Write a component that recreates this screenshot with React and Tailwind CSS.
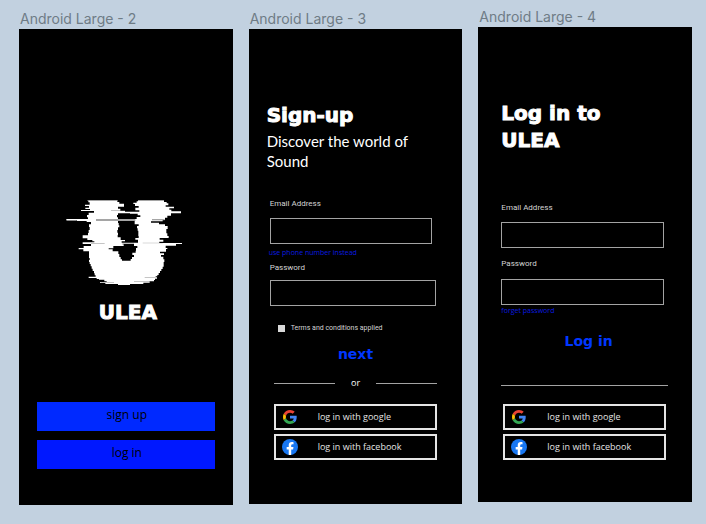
const heading = "font-['DejaVu_Sans',sans-serif] font-bold text-white text-[20px] leading-[27px] [-webkit-text-stroke:1px_#fff]";
const label = "block w-fit font-['Roboto',sans-serif] text-[8px] leading-[10px] text-[#d4d4d4]";
const field = "block h-[26px] w-full border border-[#a3a3a3] bg-black px-2 text-[9px] text-white outline-none";
const hint = "block w-fit text-[7px] leading-[10px] text-[#0a1be0]";
const action = "block w-full text-center font-['DejaVu_Sans',sans-serif] text-[14px] font-bold leading-5 text-[#0037ff]";

function Artboard({ title, className, children }) {
  return (
    <section className={`min-w-0 flex-1 ${className}`}>
      <h2 className="mb-px whitespace-nowrap pl-px font-['Inter',sans-serif] text-[14px] leading-[18px] text-[#6f7c86]">{title}</h2>
      <div className="bg-black font-['Open_Sans',sans-serif]">{children}</div>
    </section>
  );
}

function GlitchLogo() {
  return (
    <svg viewBox="48 54 348 264" className="block h-[88px] w-[116px]" fill="#fff" role="img" aria-label="ULEA logo">
      <path d="M115 60H202V66H208V71H222V80H204V86H211V92H225V95H243V100H204V105H201V112H204V117H256V123H204V129H206V136H208V142H204V150H202V158H204V165H203V172H212V180H225V184H215V188H264V179H256V174H266V168H265V152H263V145H261V138H266V133H254V117H260V111H271V106H263V101H240V95H268V91H256V83H266V78H255V72H250V68H260V64H264V60H342V66H350V70H355V76H347V80H372V85H358V89H364V94H393V100H363V107H352V113H345V120H338V124H303V128H327V133H345V138H353V147H349V160H352V168H356V174H329V179H340V185H328V189H396V192H378V197H347V204H352V207H348V215H330V220H342V225H333V230H340V238H343V246H341V260H338V267H334V273H330V279H326V285H322V289H317V292H321V296H315V300H312V304H299V308H280V312H240V315H204V312H166V309H150V306H170V304H163V300H147V297H140V294H116V290H137V286H134V280H132V273H128V266H125V259H122V252H119V246H117V240H119V234H117V214H100V208H86V204H101V198H123V192H98V187H133V184H127V180H112V175H98V166H114V159H116V150H119V141H117V133H123V126H110V123H81V121H49V117H114V112H111V105H116V98H132V93H93V90H120V87H106V83H117V78H105V74H119V67H115Z" />
      <path fill="#000" d="M217 191H252V198H262V204H258V212H257V218H247V225H252V231H246V237H242V242H216V238H212V231H208V222H205V214H188V208H176V205H190V198H221V193H217Z" />
      <path fill="#000" d="M123 189H164V191H123ZM278 188H338V190H278ZM183 90H225V92H183ZM146 298H163V300H146ZM284 291H316V293H284ZM252 304H300V306H252ZM151 306H192V308H151Z" opacity=".3" />
      <path fill="#888" d="M138 118H256V122H138ZM50 120H80V123H50ZM306 118H344V121H306ZM112 60H202V62H112ZM264 60H342V62H264Z" />
    </svg>
  );
}

function GoogleMark() {
  return (
    <svg viewBox="0 0 48 48" className="size-[14px]" aria-hidden="true">
      <path fill="#ea4335" d="M24 9.500c3.540 0 6.710 1.220 9.210 3.600l6.850-6.850C35.900 2.380 30.470 0 24 0 14.620 0 6.510 5.380 2.560 13.220l7.980 6.190C12.430 13.720 17.740 9.500 24 9.500z" />
      <path fill="#4285f4" d="M46.980 24.550c0-1.570-.15-3.090-.38-4.550H24v9.020h12.940c-.58 2.960-2.260 5.480-4.780 7.180l7.730 6c4.510-4.180 7.090-10.360 7.090-17.650z" />
      <path fill="#fbbc05" d="M10.530 28.590c-.48-1.450-.76-2.990-.76-4.590s.27-3.140.76-4.590l-7.980-6.190C.92 16.460 0 20.120 0 24s.92 7.540 2.560 10.780l7.970-6.190z" />
      <path fill="#34a853" d="M24 48c6.480 0 11.930-2.130 15.890-5.810l-7.730-6c-2.150 1.450-4.920 2.300-8.160 2.300-6.260 0-11.570-4.220-13.470-9.910l-7.980 6.190C6.510 42.620 14.620 48 24 48z" />
    </svg>
  );
}

function FacebookMark() {
  return (
    <svg viewBox="0 0 24 24" className="size-4" aria-hidden="true">
      <circle cx="12" cy="12" r="12" fill="#1877f2" />
      <path fill="#fff" d="M10.1 24v-8.4H7V12h3.100V9.300c0-3 1.800-4.700 4.600-4.700 1.300 0 2.600.25 2.600.25v3h-1.500c-1.500 0-2 .95-2 1.900V12h3.400l-.55 3.600h-2.850V24z" />
    </svg>
  );
}

function SocialButtons() {
  const button = "flex h-[26px] w-full items-center border-2 border-[#e5e5e5] bg-black pl-[6px] text-left text-[9px] leading-3 text-[#e5e5e5]";
  const icon = "mr-5 flex w-4 shrink-0 justify-center";
  return (
    <div className="flex flex-col gap-1">
      <button type="button" className={button}>
        <span className={icon}><GoogleMark /></span>log in with google
      </button>
      <button type="button" className={button}>
        <span className={icon}><FacebookMark /></span>log in with facebook
      </button>
    </div>
  );
}

export default function App() {
  return (
    <main className="flex min-h-screen items-start gap-4 bg-[#c2d1e0] pb-5 pl-[19px] pr-[14px]">
      <Artboard title="Android Large - 2" className="pt-[10px]">
        <div className="px-[18px] pb-9 pt-[169px]">
          <div className="flex justify-center pr-1"><GlitchLogo /></div>
          <h1 className={`${heading} mt-[13px] pl-1 text-center`}>ULEA</h1>
          <div className="mt-[76px] flex flex-col gap-[9px]">
            <button type="button" className="h-[29px] bg-[#0029ff] pb-1 pl-[2px] text-[12px] leading-4 text-black">sign up</button>
            <button type="button" className="h-[29px] bg-[#0018ff] pb-1 pl-[2px] text-[12px] leading-4 text-black">log in</button>
          </div>
        </div>
      </Artboard>

      <Artboard title="Android Large - 3" className="pt-[10px]">
        <form className="px-[18px] pb-11 pt-[73px]">
          <h1 className={heading}>Sign-up</h1>
          <p className="mt-[2px] font-['Lato',sans-serif] text-[15px] leading-5 text-white">Discover the world of<br />Sound</p>
          <div className="mt-7 pl-[3px] pr-3">
            <label htmlFor="signup-email" className={label}>Email Address</label>
            <input id="signup-email" type="email" className={`${field} mt-[9px]`} />
          </div>
          <a href="#phone" className={`${hint} mt-1 pl-[2px]`}>use phone number instead</a>
          <div className="mt-[5px] pl-[3px] pr-2">
            <label htmlFor="signup-password" className={label}>Password</label>
            <input id="signup-password" type="password" className={`${field} mt-[7px]`} />
          </div>
          <div className="mt-[17px] flex h-[10px] items-center gap-[6px] pl-[11px]">
            <input id="terms" type="checkbox" className="size-[7px] appearance-none bg-[#d9d9d9] checked:bg-[#0037ff]" />
            <label htmlFor="terms" className="font-['Roboto',sans-serif] text-[7px] leading-[10px] text-[#d4d4d4]">Terms and conditions applied</label>
          </div>
          <button type="button" className={`${action} mt-[11px]`}>next</button>
          <div className="mt-[13px] flex items-center gap-4 px-[7px] text-[9px] leading-3 text-white">
            <span className="h-px flex-1 bg-[#a3a3a3]" />or<span className="h-px flex-1 bg-[#a3a3a3]" />
          </div>
          <div className="mt-[15px] px-[7px]"><SocialButtons /></div>
        </form>
      </Artboard>

      <Artboard title="Android Large - 4" className="pt-2">
        <form className="pb-[42px] pl-[23px] pr-6 pt-[73px]">
          <h1 className={heading}>Log in to<br />ULEA</h1>
          <div className="mt-[49px] pr-1">
            <label htmlFor="login-email" className={label}>Email Address</label>
            <input id="login-email" type="email" className={`${field} mt-[9px]`} />
          </div>
          <div className="mt-[11px] pr-1">
            <label htmlFor="login-password" className={label}>Password</label>
            <input id="login-password" type="password" className={`${field} mt-[10px]`} />
          </div>
          <a href="#forgot" className={`${hint} mt-px`}>forget password</a>
          <button type="button" className={`${action} mt-[15px] pl-2`}>Log in</button>
          <hr className="mt-[34px] border-[#a3a3a3]" />
          <div className="mt-[18px] px-[2px]"><SocialButtons /></div>
        </form>
      </Artboard>
    </main>
  );
}
